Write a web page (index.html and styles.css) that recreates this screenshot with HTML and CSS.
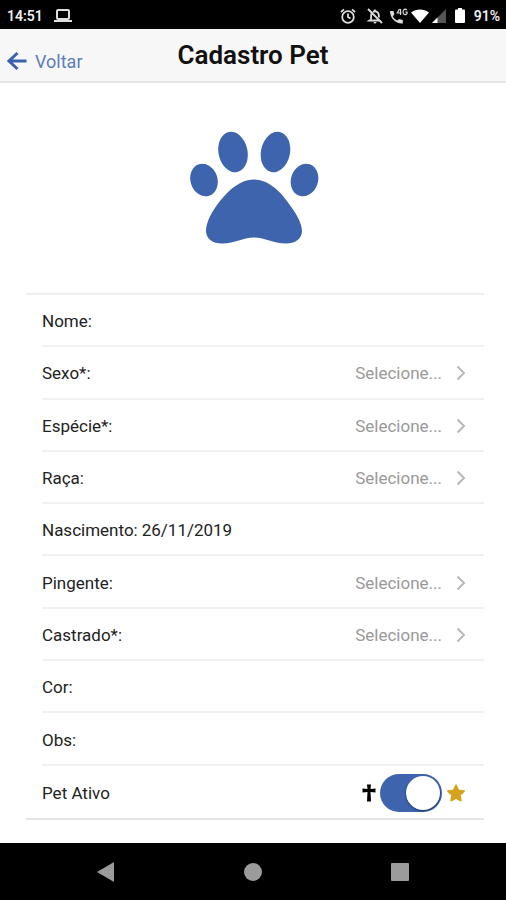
FILE: index.html
```html
<!DOCTYPE html>
<html lang="pt-BR">
<head>
<meta charset="utf-8">
<meta name="viewport" content="width=device-width, initial-scale=1">
<title>Cadastro Pet</title>
<link rel="stylesheet" href="styles.css">
</head>
<body>
<div class="status">
  <span>14:51</span>
  <svg class="laptop" width="18" height="14" viewBox="0 0 18 14"><rect x="3" y="1" width="12" height="9" rx="1" fill="none" stroke="#ddd" stroke-width="2"/><path d="M0 11h18v2H0z" fill="#ddd"/></svg>
  <div class="status-icons">
    <svg width="16" height="16" viewBox="0 0 16 16" fill="none" stroke="#ddd" stroke-width="1.8"><circle cx="8" cy="9" r="5.800"/><path d="M8 5.500V9l2.500 1.500M1 4l3-2.600M15 4l-3-2.600"/></svg>
    <svg class="bell" width="16" height="16" viewBox="0 0 16 16" fill="none" stroke="#ddd" stroke-width="1.8"><path d="M4.600 5.500C4 6.500 4 8 4 11.500L2.500 12.500H12M6 4c1-.8 3-.8 4.200 0C11.800 5 12 7 12 9.500M8 1.500V3M1 1l14 14"/><path d="M6.500 14h3a1.500 1.500 0 0 1-3 0z" fill="#ddd" stroke="none"/></svg>
    <svg width="18" height="16" viewBox="0 0 18 16"><path d="M0 3h3.500l.9 3.500-1.600 1.700c1 2 2.400 3.400 4.500 4.400L9 11l3.800 1v3.500C5.500 16 0 10 0 3z" fill="#ddd"/><path d="M9.500 1L7.300 5H11.500M10.500 1v6M17 2.200c-1.800-1.800-4-1-4 1.800s2.500 3.400 4 1.700V4h-1.800" fill="none" stroke="#ddd" stroke-width="1.200"/></svg>
    <svg width="18" height="14" viewBox="0 0 18 14"><path d="M0 3.500C5-.6 13-.6 18 3.500L9 14z" fill="#fff"/></svg>
    <svg width="14" height="14" viewBox="0 0 14 14"><path d="M0 14L14 0v14z" fill="#555"/><path d="M0 14l5.500-5.500V14z" fill="#fff"/></svg>
    <svg class="battery" width="10" height="15" viewBox="0 0 10 15"><path d="M3 0h4v1.500h2q1 0 1 1V14q0 1-1 1H1q-1 0-1-1V2.500q0-1 1-1h2z" fill="#fff"/></svg>
    <span>91%</span>
  </div>
</div>

<header class="topbar">
  <a class="back" href="#"><svg width="20" height="20" viewBox="0 0 20 20"><path d="M10.500 2L2 10l8.500 8M2 10h17.500" fill="none" stroke="#3a62ae" stroke-width="3"/></svg>Voltar</a>
  <h1>Cadastro Pet</h1>
</header>

<main class="content">
  <svg class="paw" width="130" height="114" viewBox="0 0 130 114" fill="#3e64ae">
    <ellipse cx="14" cy="49" rx="13.500" ry="16.500" transform="rotate(-18 14 49)"/>
    <ellipse cx="43" cy="21" rx="14.500" ry="20.500" transform="rotate(-12 43 21)"/>
    <ellipse cx="85.500" cy="21" rx="14.500" ry="20.500" transform="rotate(12 85.500 21)"/>
    <ellipse cx="114.500" cy="49" rx="13.500" ry="16.500" transform="rotate(18 114.500 49)"/>
    <path d="M64 48.500C78 48.500 90 60 98 71.500C106 82 112 92 112 100C112 108 105 112.500 96 112.500C82 112.500 76 106.500 64 106.500C52 106.500 46 112.500 32 112.500C23 112.500 16 108 16 100C16 91 22 80 30 70C39 59 50 48.500 64 48.500z"/>
  </svg>

  <form class="list">
    <div class="row"><label for="nome">Nome:</label><input class="field" id="nome" type="text"></div>
    <div class="row"><label for="sexo">Sexo*:</label><select class="pick" id="sexo"><option>Selecione...</option></select><svg class="chevron" viewBox="0 0 10 16"><path d="M1.500 1.500L8 8l-6.500 6.500"/></svg></div>
    <div class="row"><label for="especie">Espécie*:</label><select class="pick" id="especie"><option>Selecione...</option></select><svg class="chevron" viewBox="0 0 10 16"><path d="M1.500 1.500L8 8l-6.500 6.500"/></svg></div>
    <div class="row"><label for="raca">Raça:</label><select class="pick" id="raca"><option>Selecione...</option></select><svg class="chevron" viewBox="0 0 10 16"><path d="M1.500 1.500L8 8l-6.500 6.500"/></svg></div>
    <div class="row"><label for="nascimento">Nascimento:</label><input class="field" id="nascimento" type="text" value="26/11/2019"></div>
    <div class="row"><label for="pingente">Pingente:</label><select class="pick" id="pingente"><option>Selecione...</option></select><svg class="chevron" viewBox="0 0 10 16"><path d="M1.500 1.500L8 8l-6.500 6.500"/></svg></div>
    <div class="row"><label for="castrado">Castrado*:</label><select class="pick" id="castrado"><option>Selecione...</option></select><svg class="chevron" viewBox="0 0 10 16"><path d="M1.500 1.500L8 8l-6.500 6.500"/></svg></div>
    <div class="row"><label for="cor">Cor:</label><input class="field" id="cor" type="text"></div>
    <div class="row"><label for="obs">Obs:</label><input class="field" id="obs" type="text"></div>
    <div class="row">
      <label for="ativo">Pet Ativo</label>
      <div class="active">
        <svg width="14" height="18" viewBox="0 0 14 18"><path d="M5 .5h4L8.500 5l5-.5v4l-5-.5L9 17.500H5L5.500 8l-5 .5v-4l5 .5z" fill="#000"/></svg>
        <input class="toggle" id="ativo" type="checkbox" checked>
        <svg width="20" height="20" viewBox="0 0 20 20"><path d="M10 2l2.500 5.300 5.700.8-4.200 4 1 5.800-5-2.800-5 2.800 1-5.800-4.200-4 5.700-.8z" fill="#d4a31c" stroke="#d4a31c" stroke-width="1.500" stroke-linejoin="round"/></svg>
      </div>
    </div>
  </form>
</main>

<nav class="navbar">
  <button type="button" aria-label="Voltar"><svg width="20" height="20" viewBox="0 0 20 20"><path d="M1 10L18 0v20z"/></svg></button>
  <button type="button" aria-label="Início"><svg width="20" height="20" viewBox="0 0 20 20"><circle cx="10" cy="10" r="9"/></svg></button>
  <button type="button" aria-label="Recentes"><svg width="20" height="20" viewBox="0 0 20 20"><rect x="1" y="1" width="18" height="18" rx="1"/></svg></button>
</nav>
</body>
</html>
```
FILE: styles.css
```css
* {
  box-sizing: border-box;
}

body {
  margin: 0;
  min-height: 100vh;
  display: flex;
  flex-direction: column;
  background: #fff;
  color: #222;
  font-family: Roboto, "Liberation Sans", sans-serif;
  font-size: 17px;
}

svg {
  display: block;
  flex: none;
}

.status {
  display: flex;
  align-items: center;
  height: 29px;
  padding: 2px 6px 0 7px;
  background: #000;
  color: #eee;
  font-size: 14px;
  font-weight: 600;
}

.laptop {
  margin-left: 11px;
}

.status-icons {
  display: flex;
  align-items: center;
  gap: 3px;
  margin-left: auto;
}

.bell {
  margin: 0 4px 0 8px;
}

.battery {
  margin: 0 6px;
}

.topbar {
  display: grid;
  grid-template-columns: 1fr auto 1fr;
  height: 54px;
  background: #f7f7f7;
  border-bottom: 2px solid #e6e6e6;
}

.back {
  display: flex;
  align-items: center;
  gap: 8px;
  padding: 12px 0 0 7px;
  color: #5d7db8;
  font-size: 18px;
  text-decoration: none;
}

h1 {
  margin: 0;
  align-self: center;
  color: #111;
  font-size: 26px;
  font-weight: 600;
  line-height: 30px;
}

.content {
  flex: 1;
  display: flex;
  flex-direction: column;
  padding: 48px 22px 23px 26px;
}

.paw {
  align-self: center;
  margin-bottom: 48px;
}

.list {
  flex: 1;
  display: grid;
  grid-auto-rows: minmax(48px, 1fr);
  border-top: 2px solid #efefef;
  border-bottom: 2px solid #e4e4e4;
}

.row {
  display: flex;
  align-items: center;
  gap: 4px;
  margin-left: 16px;
  padding: 2px 18px 0 0;
  border-bottom: 2px solid #f1f1f1;
}

.row:last-child {
  border-bottom: 0;
}

.field,
.pick {
  flex: 1;
  min-width: 0;
  height: 32px;
  padding: 0;
  border: 0;
  background: none;
  color: #222;
  font: inherit;
}

.pick {
  appearance: none;
  color: #999;
  text-align: right;
  text-align-last: right;
}

.chevron {
  width: 10px;
  height: 16px;
  margin-left: 10px;
  fill: none;
  stroke: #b8b8b8;
  stroke-width: 2;
}

.active {
  display: flex;
  align-items: center;
  gap: 4px;
  margin-left: auto;
}

.toggle {
  appearance: none;
  display: flex;
  width: 62px;
  height: 38px;
  margin: 0;
  padding: 2px;
  border-radius: 19px;
  background: #b8b8b8;
}

.toggle::before {
  content: "";
  width: 34px;
  height: 34px;
  border-radius: 50%;
  background: #fff;
  box-shadow: 0 1px 2px #172f63;
}

.toggle:checked {
  justify-content: flex-end;
  background: #3e64ae;
}

.navbar {
  display: flex;
  justify-content: space-between;
  align-items: center;
  height: 57px;
  padding: 0 17%;
  background: #000;
}

.navbar button {
  display: grid;
  place-items: center;
  width: 40px;
  height: 40px;
  padding: 0;
  border: 0;
  background: none;
  fill: #9b9b9b;
}
```
